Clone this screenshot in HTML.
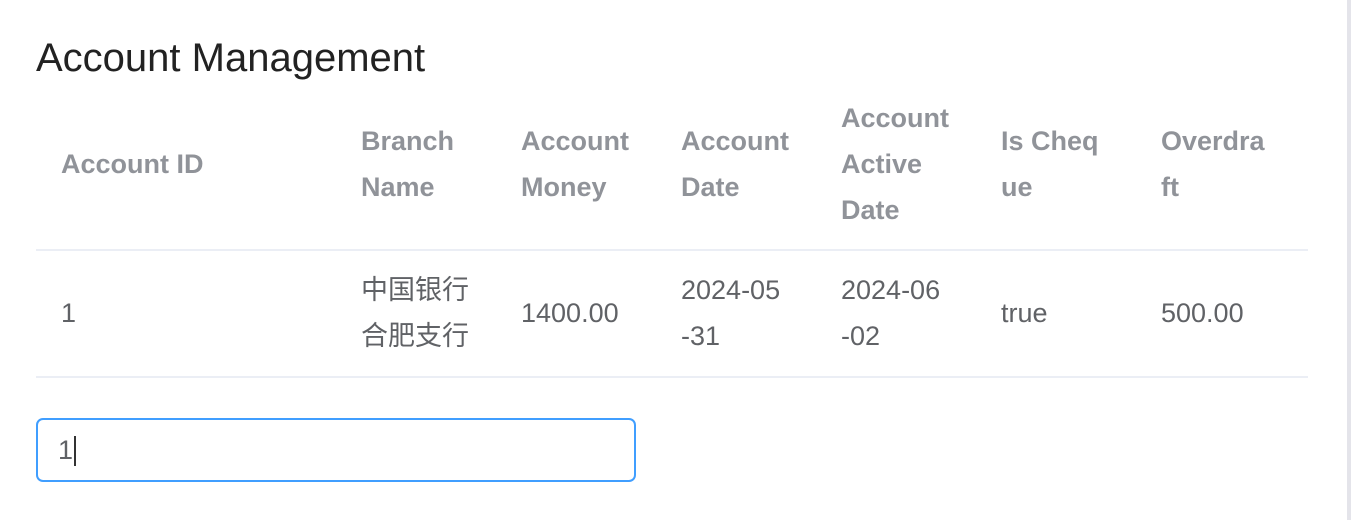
<!DOCTYPE html>
<html><head><meta charset="utf-8"><style>
body{margin:0;width:1351px;height:520px;background:#fff;font-family:"Liberation Sans","Noto Sans CJK SC",sans-serif;position:relative;overflow:hidden}
.sb{position:absolute;right:0;top:0;width:4px;height:520px;background:#e4e4ea}
h1{position:absolute;left:36px;top:35px;margin:0;font-size:40px;font-weight:400;color:#222;line-height:46px}
.c{position:absolute;font-size:27px;line-height:46px;color:#606266}
.h{font-weight:700;color:#909399}
.line{position:absolute;left:36px;width:1272px;height:2px;background:#ebeef5}
.inp{position:absolute;left:36px;top:418px;width:596px;height:60px;border:2px solid #409eff;border-radius:7px;box-sizing:content-box}
.inp span{position:absolute;left:20px;top:7px;font-size:27px;line-height:46px;color:#606266}
.inp i{position:absolute;left:36px;top:16px;width:2px;height:30px;background:#333}
</style></head><body>
<div class="sb"></div>
<h1>Account Management</h1>
<div class="c h" style="left:61px;top:141px">Account ID</div>
<div class="c h" style="left:361px;top:118px">Branch<br>Name</div>
<div class="c h" style="left:521px;top:118px">Account<br>Money</div>
<div class="c h" style="left:681px;top:118px">Account<br>Date</div>
<div class="c h" style="left:841px;top:95px">Account<br>Active<br>Date</div>
<div class="c h" style="left:1001px;top:118px">Is Cheq<br>ue</div>
<div class="c h" style="left:1161px;top:118px">Overdra<br>ft</div>
<div class="line" style="top:249px"></div>
<div class="c" style="left:61px;top:290px">1</div>
<div class="c" style="left:361px;top:267px">中国银行<br>合肥支行</div>
<div class="c" style="left:521px;top:290px">1400.00</div>
<div class="c" style="left:681px;top:267px">2024-05<br>-31</div>
<div class="c" style="left:841px;top:267px">2024-06<br>-02</div>
<div class="c" style="left:1001px;top:290px">true</div>
<div class="c" style="left:1161px;top:290px">500.00</div>
<div class="line" style="top:376px"></div>
<div class="inp"><span>1</span><i></i></div>
</body></html>
